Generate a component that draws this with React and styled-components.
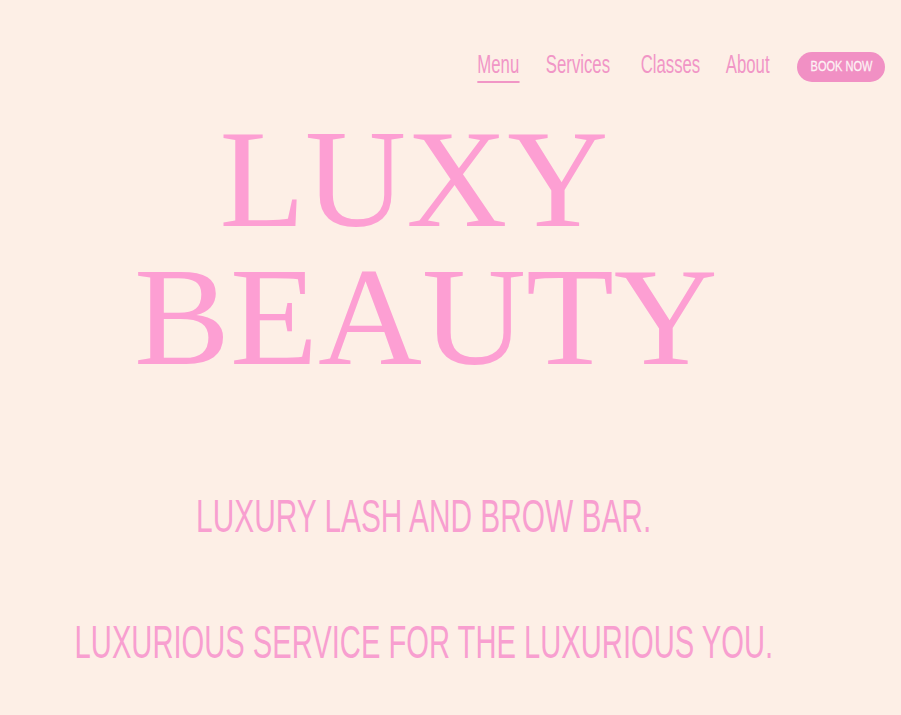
import React from 'react';
import styled, { createGlobalStyle } from 'styled-components';

const GlobalStyle = createGlobalStyle`
	html, body {
		margin: 0;
		padding: 0;
		background-color: #fdefe6;
	}
	* {
		box-sizing: border-box;
	}
`;

const navItems = ['Menu', 'Services', 'Classes', 'About'];

const App = () => {
	return (
		<>
			<GlobalStyle />
			<Page>
				<Header>
					<Nav>
						{navItems.map((item, index) => (
							<NavItem key={item} $active={index === 0}>
								{item}
							</NavItem>
						))}
					</Nav>
					<Button>
						<span>BOOK NOW</span>
					</Button>
				</Header>
				<Main>
					<Headline>
						<HeadLine $scale={1} $pad='0 20px 0 0'>
							LUXY
						</HeadLine>
						<HeadLine $scale={1.028} $pad='0 0 0 4px'>
							BEAUTY
						</HeadLine>
					</Headline>
					<Tagline $top='107px' $scale={0.649}>
						<span>LUXURY LASH AND BROW BAR.</span>
					</Tagline>
					<Tagline $top='80px' $scale={0.634}>
						<span>LUXURIOUS SERVICE FOR THE LUXURIOUS YOU.</span>
					</Tagline>
				</Main>
			</Page>
		</>
	);
};

const Page = styled.div`
	width: 901px;
	height: 715px;
	overflow: hidden;
	background-color: #fdefe6;
	font-family: 'Liberation Sans', Arial, sans-serif;
`;

const Header = styled.header`
	display: flex;
	justify-content: flex-end;
	align-items: center;
	padding: 51px 16px 0 0;
`;

const Nav = styled.ul`
	display: flex;
	align-items: center;
	margin: 0 17px 0 0;
	padding: 0;
	list-style: none;
`;

const NavItem = styled.li`
	font-size: 25px;
	line-height: 26px;
	padding-bottom: 4px;
	color: #f196c6;
	border-bottom: 2px solid ${(p) => (p.$active ? '#f196c6' : 'transparent')};
	transform: scaleX(0.67);
	cursor: pointer;
`;

const Button = styled.button`
	display: flex;
	justify-content: center;
	align-items: center;
	width: 88px;
	height: 30px;
	border: none;
	border-radius: 15px;
	background-color: #f190c4;
	color: #fdf2f4;
	font-family: 'Liberation Sans', Arial, sans-serif;
	font-size: 15.5px;
	padding: 0 0 2px;
	cursor: pointer;

	span {
		display: inline-block;
		white-space: nowrap;
		-webkit-text-stroke: 0.3px #fdf2f4;
		transform: scaleX(0.71);
	}
`;

const Main = styled.main`
	padding-right: 53px;
	display: flex;
	flex-direction: column;
	align-items: center;
`;

const Headline = styled.h1`
	margin: 27px 0 0;
	font-family: 'Liberation Serif', 'Times New Roman', serif;
	font-weight: normal;
	font-size: 140px;
	line-height: 138px;
	color: #fd9fd3;
	text-align: center;
`;

const HeadLine = styled.span`
	display: block;
	padding: ${(p) => p.$pad};
	white-space: nowrap;
	transform: scaleX(${(p) => p.$scale});
`;

const Tagline = styled.p`
	margin: ${(p) => p.$top} 0 0;
	font-size: 46px;
	line-height: 46px;
	color: #f89fd0;
	white-space: nowrap;
	text-align: center;

	span {
		display: inline-block;
		transform: scaleX(${(p) => p.$scale});
	}
`;

export default App;
